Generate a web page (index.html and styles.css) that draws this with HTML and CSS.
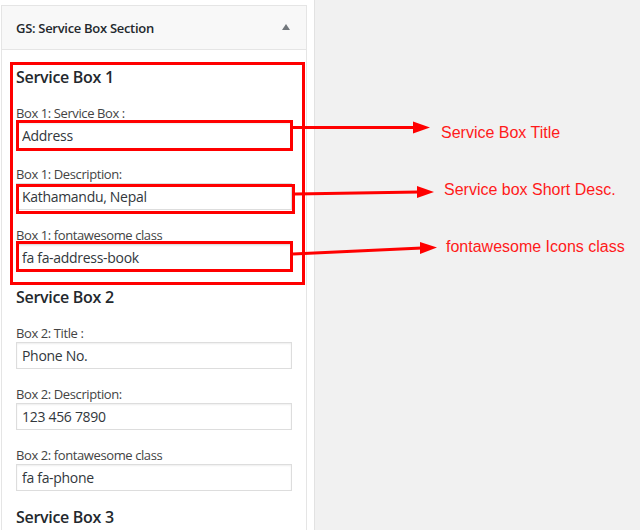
FILE: index.html
```html
<!DOCTYPE html>
<html>
<head>
<meta charset="utf-8">
<link rel="stylesheet" href="styles.css">
</head>
<body>
<div class="page">
  <aside class="sidebar">
    <div class="widget">
      <div class="widget-top">
        <span class="widget-title">GS: Service Box Section</span>
        <span class="toggle"></span>
      </div>
      <div class="widget-inside">
        <div class="group">
          <h3>Service Box 1</h3>
          <div class="field"><label>Box 1: Service Box :</label><input type="text" value="Address"></div>
          <div class="field"><label>Box 1: Description:</label><input type="text" value="Kathamandu, Nepal"></div>
          <div class="field"><label>Box 1: fontawesome class</label><input type="text" value="fa fa-address-book"></div>
        </div>
        <div class="group">
          <h3>Service Box 2</h3>
          <div class="field"><label>Box 2: Title :</label><input type="text" value="Phone No."></div>
          <div class="field"><label>Box 2: Description:</label><input type="text" value="123 456 7890"></div>
          <div class="field"><label>Box 2: fontawesome class</label><input type="text" value="fa fa-phone"></div>
        </div>
        <div class="group">
          <h3>Service Box 3</h3>
        </div>
      </div>
    </div>
  </aside>
  <main class="canvas"></main>
</div>
<svg class="annotations" width="640" height="530" viewBox="0 0 640 530">
  <g fill="none" stroke="#ff0000" stroke-width="3">
    <rect x="11.5" y="63.5" width="292" height="220"/>
    <rect x="17.5" y="121.5" width="274" height="28"/>
    <rect x="17.5" y="185.5" width="276" height="27"/>
    <rect x="17.5" y="242.5" width="274" height="28"/>
    <line x1="293" y1="127.5" x2="415" y2="127.5"/>
    <line x1="295" y1="194" x2="419" y2="192"/>
    <line x1="293" y1="254" x2="422" y2="248"/>
  </g>
  <g fill="#ff0000">
    <polygon points="413,121.5 430,127.5 413,133.5"/>
    <polygon points="417,186 434,192 417,198"/>
    <polygon points="420,242 437,247.5 420,254"/>
  </g>
  <g class="note">
    <text x="441" y="138">Service Box Title</text>
    <text x="444" y="195">Service box Short Desc.</text>
    <text x="446" y="252">fontawesome Icons class</text>
  </g>
</svg>
</body>
</html>
```

FILE: styles.css
```css
html, body {
  margin: 0;
  padding: 0;
  background: #fff;
}
body {
  width: 640px;
  height: 530px;
  overflow: hidden;
  position: relative;
  font-family: "Open Sans", "Noto Sans", sans-serif;
}
.page {
  display: flex;
  height: 530px;
}
.sidebar {
  width: 315px;
  flex: none;
  background: #fff;
  border-right: 1px solid #e2e2e2;
  padding: 5px 0 0 1px;
  box-sizing: border-box;
}
.canvas {
  flex: 1;
  background: #f1f1f1;
}
.widget {
  width: 306px;
  box-sizing: border-box;
  border: 1px solid #e5e5e5;
  border-bottom: none;
  height: 530px;
  background: #fff;
}
.widget-top {
  height: 43px;
  background: #f8f8f8;
  border-bottom: 1px solid #e5e5e5;
  display: flex;
  align-items: center;
  justify-content: space-between;
  padding: 0 16px 0 14px;
}
.widget-title {
  font-size: 13px;
  font-weight: 600;
  color: #23282d;
  letter-spacing: -0.3px;
}
.toggle {
  width: 0;
  height: 0;
  border-left: 4px solid transparent;
  border-right: 4px solid transparent;
  border-bottom: 6px solid #72777c;
  margin-top: -1px;
}
.widget-inside {
  padding: 16px 14px 0 14px;
}
.group + .group {
  margin-top: 15px;
}
h3 {
  margin: 0;
  font-size: 16px;
  line-height: 22px;
  font-weight: 600;
  color: #23282d;
  letter-spacing: -0.3px;
}
.field {
  margin-top: 16px;
}
.field label {
  display: block;
  font-size: 13px;
  line-height: 18px;
  color: #444;
  letter-spacing: -0.4px;
}
.field input {
  display: block;
  width: 276px;
  height: 27px;
  box-sizing: border-box;
  margin: 0;
  border: 1px solid #ddd;
  box-shadow: inset 0 1px 2px rgba(0,0,0,0.07);
  background: #fff;
  padding: 0 5px;
  font-family: "Open Sans", "Noto Sans", sans-serif;
  font-size: 14px;
  color: #32373c;
  letter-spacing: -0.3px;
  outline: none;
}
.annotations {
  position: absolute;
  left: 0;
  top: 0;
  pointer-events: none;
}
.note text {
  font-family: "Liberation Sans", Arial, sans-serif;
  font-size: 16px;
  fill: #ff1a1a;
}
```
